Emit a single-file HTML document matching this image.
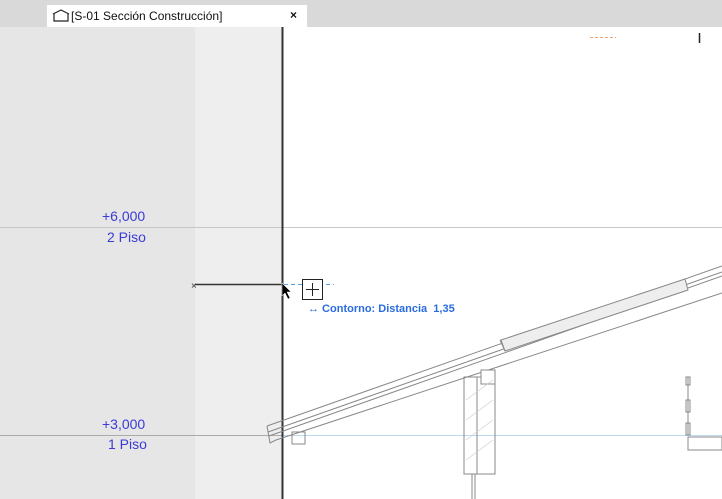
<!DOCTYPE html>
<html><head><style>
body{margin:0;width:722px;height:499px;overflow:hidden;background:#fff;font-family:"Liberation Sans",sans-serif;position:relative}
.t{position:absolute;color:#3b3bd6;font-size:14px}
</style></head><body>
<div style="position:absolute;left:0;top:0;width:722px;height:27px;background:#d9d9d9"></div>
<div style="position:absolute;left:47px;top:5px;width:260px;height:22px;background:#fff"></div>
<svg style="position:absolute;left:52px;top:9px" width="18" height="13"><path d="M1 5 L9 1 L17 5 M2 5 V12 H16 V5" fill="none" stroke="#222" stroke-width="1.2"/></svg>
<div style="position:absolute;left:71px;top:9px;font-size:12px;color:#111">[S-01 Sección Construcción]</div>
<div style="position:absolute;left:290px;top:8px;font-size:12px;font-weight:bold;color:#111">×</div>
<div style="position:absolute;left:0;top:27px;width:195px;height:472px;background:#e6e6e6"></div>
<div style="position:absolute;left:195px;top:27px;width:87px;height:472px;background:#eeeeee"></div>
<svg style="position:absolute;left:0;top:0" width="722" height="499">
<line x1="0" y1="227.5" x2="722" y2="227.5" stroke="#c8c8c8"/>
<line x1="0" y1="435.5" x2="282" y2="435.5" stroke="#aaa"/>
<line x1="282" y1="435.5" x2="722" y2="435.5" stroke="#bcd9ee"/>
<line x1="282.5" y1="27" x2="282.5" y2="499" stroke="#333" stroke-width="2"/>
<line x1="699.5" y1="33" x2="699.5" y2="43" stroke="#222" stroke-width="1.5"/>
<line x1="590" y1="37.5" x2="616" y2="37.5" stroke="#f0a070" stroke-dasharray="3,2"/>
<line x1="195" y1="284.5" x2="282" y2="284.5" stroke="#333" stroke-width="1.5"/>
<text x="191" y="289" font-size="10" fill="#333">×</text>
<line x1="284" y1="284.5" x2="334" y2="284.5" stroke="#5aa0e0" stroke-dasharray="4,3"/>
<path d="M282 283 L282 296 L285 293 L288 299 L290 298 L287 292 L291 292 Z" fill="#000" stroke="#fff" stroke-width=".5"/>
<rect x="302.5" y="279.5" width="20" height="20" fill="#fff" stroke="#222"/>
<path d="M312.5 283 V296 M306 289.5 H319" stroke="#222"/>
<g fill="none" stroke="#888" stroke-width="1">
<path d="M267 426 L722 266 M268 432 L722 272 M269 436 L722 276 M276 440 L722 293"/>
<path d="M267 426 L270 443 L276 440"/>
<path d="M501 340 L685 279 L688 290 L505 351 Z" fill="#eee"/>
<path d="M500 340 L505 351"/>
<rect x="292" y="432" width="13" height="12"/>
<rect x="464" y="377" width="31" height="97"/>
<rect x="481" y="370" width="14" height="14" fill="#fff"/>
<line x1="477" y1="377" x2="477" y2="474"/>
<line x1="472" y1="474" x2="472" y2="499"/><line x1="475" y1="474" x2="475" y2="499"/>
<path d="M688 377 V435 M686 377 h4 v8 h-4z M686 400 h4 v12 h-4z M686 423 h4 v12 h-4z"/>
<rect x="688" y="437" width="34" height="13"/>
</g>
<g stroke="#ccc" stroke-width=".6"><path d="M466 400 L493 380 M466 420 L493 400 M466 440 L493 420 M466 460 L493 440"/></g>
</svg>
<div class="t" style="left:102px;top:208px">+6,000</div>
<div class="t" style="left:107px;top:229px">2 Piso</div>
<div class="t" style="left:102px;top:416px">+3,000</div>
<div class="t" style="left:108px;top:436px">1 Piso</div>
<div style="position:absolute;left:306px;top:303px;font-size:11px;font-weight:bold;color:#2a6ce0;background:#fff;padding:0 2px">↔ Contorno: Distancia&nbsp; 1,35</div>
</body></html>
